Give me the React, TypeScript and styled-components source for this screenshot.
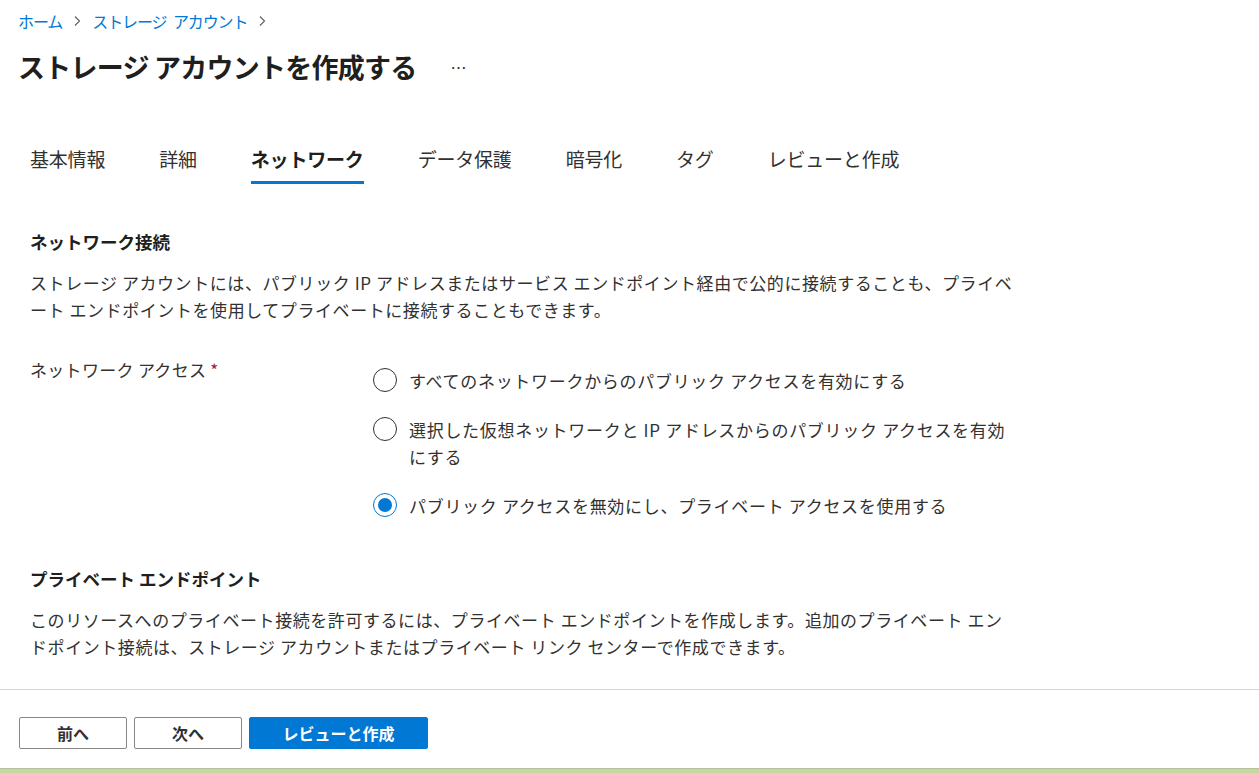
import styled, { createGlobalStyle } from "styled-components";

const GlobalStyle = createGlobalStyle`
  html, body {
    margin: 0;
    padding: 0;
    background: #ffffff;
  }
  body {
    font-family: "Noto Sans CJK JP", "Noto Sans", sans-serif;
    color: #323130;
  }
`;

const tabs = ["基本情報", "詳細", "ネットワーク", "データ保護", "暗号化", "タグ", "レビューと作成"];

const options = [
  "すべてのネットワークからのパブリック アクセスを有効にする",
  "選択した仮想ネットワークと IP アドレスからのパブリック アクセスを有効にする",
  "パブリック アクセスを無効にし、プライベート アクセスを使用する",
];

const Page = styled.div`
  display: flex;
  flex-direction: column;
  height: 773px;
  overflow: hidden;
`;

const Main = styled.div`
  flex: 1;
  padding: 0 0 0 18px;
`;

const Breadcrumb = styled.nav`
  display: flex;
  align-items: center;
  gap: 10px;
  height: 22px;
  margin-top: 10px;
  font-size: 16px;
  line-height: 22px;
`;

const Crumb = styled.a`
  color: #0078d4;
  text-decoration: none;
  letter-spacing: -1.1px;
  word-spacing: 4px;
`;

const Chevron = styled.svg`
  width: 10px;
  height: 12px;
  color: #605e5c;
`;

const TitleRow = styled.div`
  display: flex;
  align-items: center;
  gap: 34px;
  margin-top: 16px;
  height: 38px;
`;

const Title = styled.h1`
  margin: 0;
  font-size: 27px;
  line-height: 38px;
  font-weight: 700;
  color: #201f1e;
  letter-spacing: -0.75px;
`;

const More = styled.span`
  font-size: 16px;
  color: #323130;
  letter-spacing: 1px;
`;

const TabBar = styled.div`
  display: flex;
  gap: 54px;
  margin: 60px 0 0 12px;
`;

const Tab = styled.div<{ $active?: boolean }>`
  font-size: 19px;
  line-height: 26px;
  padding-bottom: 9px;
  font-weight: ${(p) => (p.$active ? 700 : 400)};
  color: ${(p) => (p.$active ? "#201f1e" : "#323130")};
  border-bottom: 3px solid ${(p) => (p.$active ? "#0078d4" : "transparent")};
  letter-spacing: -0.2px;
`;

const Content = styled.div`
  padding-left: 12px;
  width: 1000px;
`;

const SectionTitle = styled.h2<{ $top: number }>`
  margin: ${(p) => p.$top}px 0 0;
  font-size: 17.5px;
  line-height: 26px;
  font-weight: 700;
  color: #201f1e;
`;

const Paragraph = styled.p`
  margin: 14px 0 0;
  font-size: 17px;
  line-height: 27px;
  letter-spacing: 0.57px;
`;

const FieldRow = styled.div`
  display: flex;
  margin-top: 34px;
`;

const Label = styled.div`
  width: 343px;
  flex-shrink: 0;
  font-size: 17px;
  line-height: 26px;
  letter-spacing: 0.3px;
`;

const Required = styled.span`
  color: #a4262c;
  margin-left: 4px;
`;

const RadioGroup = styled.div`
  display: flex;
  flex-direction: column;
  gap: 22px;
  margin-top: 10px;
  width: 636px;
`;

const Option = styled.label`
  display: flex;
  align-items: flex-start;
  gap: 12px;
  font-size: 17px;
  line-height: 27px;
  letter-spacing: 0.7px;
  cursor: pointer;
`;

const Circle = styled.span<{ $checked?: boolean }>`
  flex-shrink: 0;
  box-sizing: border-box;
  width: 24px;
  height: 24px;
  margin-top: 1px;
  border-radius: 50%;
  border: 1px solid ${(p) => (p.$checked ? "#0078d4" : "#323130")};
  display: flex;
  align-items: center;
  justify-content: center;

  &::after {
    content: "";
    width: 14px;
    height: 14px;
    border-radius: 50%;
    background: ${(p) => (p.$checked ? "#0078d4" : "transparent")};
  }
`;

const Footer = styled.div`
  border-top: 1px solid #d6d6d6;
  padding: 27px 0 0 19px;
  height: 51px;
  display: flex;
  gap: 7px;
`;

const Button = styled.button<{ $primary?: boolean }>`
  box-sizing: border-box;
  height: 32px;
  width: ${(p) => (p.$primary ? "179px" : "108px")};
  border-radius: 2px;
  border: 1px solid ${(p) => (p.$primary ? "#0078d4" : "#8a8886")};
  background: ${(p) => (p.$primary ? "#0078d4" : "#ffffff")};
  color: ${(p) => (p.$primary ? "#ffffff" : "#323130")};
  font-family: inherit;
  font-size: 16px;
  font-weight: 700;
  padding: 0;
`;

const StatusStrip = styled.div`
  height: 4px;
  background: #c9d7a2;
  border-top: 1px solid #b4c199;
`;

const ChevronIcon = () => (
  <Chevron viewBox="0 0 10 12">
    <path d="M3 1.5 L7.5 6 L3 10.5" fill="none" stroke="currentColor" strokeWidth="1.1" />
  </Chevron>
);

export default function App() {
  return (
    <>
      <GlobalStyle />
      <Page>
        <Main>
          <Breadcrumb>
            <Crumb href="#">ホーム</Crumb>
            <ChevronIcon />
            <Crumb href="#">ストレージ アカウント</Crumb>
            <ChevronIcon />
          </Breadcrumb>
          <TitleRow>
            <Title>ストレージ アカウントを作成する</Title>
            <More>…</More>
          </TitleRow>
          <TabBar>
            {tabs.map((t) => (
              <Tab key={t} $active={t === "ネットワーク"}>
                {t}
              </Tab>
            ))}
          </TabBar>
          <Content>
            <SectionTitle $top={45}>ネットワーク接続</SectionTitle>
            <Paragraph>
              ストレージ アカウントには、パブリック IP アドレスまたはサービス エンドポイント経由で公的に接続することも、プライベ
              <br />
              ート エンドポイントを使用してプライベートに接続することもできます。
            </Paragraph>
            <FieldRow>
              <Label>
                ネットワーク アクセス<Required>*</Required>
              </Label>
              <RadioGroup>
                {options.map((o, i) => (
                  <Option key={o}>
                    <Circle $checked={i === 2} />
                    <span>{o}</span>
                  </Option>
                ))}
              </RadioGroup>
            </FieldRow>
            <SectionTitle $top={47}>プライベート エンドポイント</SectionTitle>
            <Paragraph>
              このリソースへのプライベート接続を許可するには、プライベート エンドポイントを作成します。追加のプライベート エン
              <br />
              ドポイント接続は、ストレージ アカウントまたはプライベート リンク センターで作成できます。
            </Paragraph>
          </Content>
        </Main>
        <Footer>
          <Button>前へ</Button>
          <Button>次へ</Button>
          <Button $primary>レビューと作成</Button>
        </Footer>
        <StatusStrip />
      </Page>
    </>
  );
}
